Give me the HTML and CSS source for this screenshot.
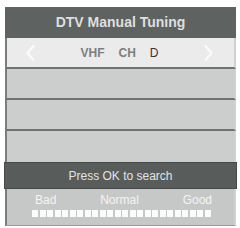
FILE: index.html
```html
<!DOCTYPE html>
<html lang="en">
<head>
  <meta charset="UTF-8">
  <title>DTV Manual Tuning</title>
  <link rel="stylesheet" href="styles.css">
</head>
<body>
  <div class="menu">
    <div class="title">DTV Manual Tuning</div>

    <!-- band / channel selector -->
    <div class="selector">
      <svg class="arrow" width="9" height="16" viewBox="0 0 9 16"><polyline points="7.5,1 1.5,8 7.5,15" /></svg>
      <div class="fields">
        <span class="key">VHF</span>
        <span class="key">CH</span>
        <span class="val">D</span>
      </div>
      <svg class="arrow" width="9" height="16" viewBox="0 0 9 16"><polyline points="1.5,1 7.5,8 1.5,15" /></svg>
    </div>

    <div class="rows">
      <div class="row"></div>
      <div class="row"></div>
      <div class="row"></div>
    </div>

    <div class="hint">Press OK to search</div>

    <!-- signal quality -->
    <div class="signal">
      <div class="labels">
        <span>Bad</span>
        <span>Normal</span>
        <span>Good</span>
      </div>
      <div class="bars"></div>
    </div>
  </div>

  <script>
    (function fillBars() {
      const bars = document.querySelector('.bars');
      for (let i = 0; i < 24; i++) {
        const b = document.createElement('span');
        b.classList.add('bar');
        bars.appendChild(b);
      }
    })();
  </script>
</body>
</html>
```

FILE: styles.css
```css
* {
  box-sizing: border-box;
}
body {
  margin: 0;
  background: #fff;
  font-family: "Liberation Sans", Arial, sans-serif;
}
.menu {
  width: 231px;
  margin: 7px 0 0 5px;
}
.title {
  height: 31px;
  background: #5e6362;
  color: #dedfdf;
  font-size: 14px;
  font-weight: bold;
  display: flex;
  align-items: center;
  justify-content: center;
  padding-bottom: 1px;
}

/* selector row */
.selector {
  height: 31px;
  background: #ebebeb;
  border-left: 2px solid #7b7e7d;
  border-right: 2px solid #d0d0d0;
  border-bottom: 2px solid #6e7271;
  display: flex;
  align-items: center;
  justify-content: space-between;
  padding: 0 21px 0 19px;
}
.arrow polyline {
  fill: none;
  stroke: #fbfbfb;
  stroke-width: 2.2;
  stroke-linecap: round;
}
.fields {
  display: flex;
  gap: 14px;
  font-size: 12px;
}
.fields .key {
  color: #7c7f7e;
  font-weight: bold;
}
.fields .val {
  color: #333;
}

/* empty list rows */
.row {
  height: 31px;
  background: #cccecd;
  border-left: 2px solid #7b7e7d;
  border-right: 2px solid #d0d0d0;
  border-bottom: 2px solid #6e7271;
}
.row:last-child {
  border-bottom: none;
}

.hint {
  height: 27px;
  margin: 0 -1px;
  background: #585d5c;
  border: 1px solid #454948;
  color: #e2e3e3;
  font-size: 12px;
  display: flex;
  align-items: center;
  justify-content: center;
}

/* signal strength */
.signal {
  height: 37px;
  background: #c6c8c7;
  border-left: 2px solid #7b7e7d;
  border-right: 2px solid #d0d0d0;
  border-bottom: 1px solid #9a9d9c;
  padding: 5px 0 0 25px;
}
.labels {
  width: 180px;
  display: flex;
  justify-content: space-between;
  color: #f4f4f4;
  font-size: 12px;
  line-height: 12px;
  padding: 0 0 0 3px;
}
.bars {
  display: flex;
  gap: 1.5px;
  margin-top: 4px;
}
.bar {
  width: 6px;
  height: 7px;
  background: #fbfbfb;
}
```
